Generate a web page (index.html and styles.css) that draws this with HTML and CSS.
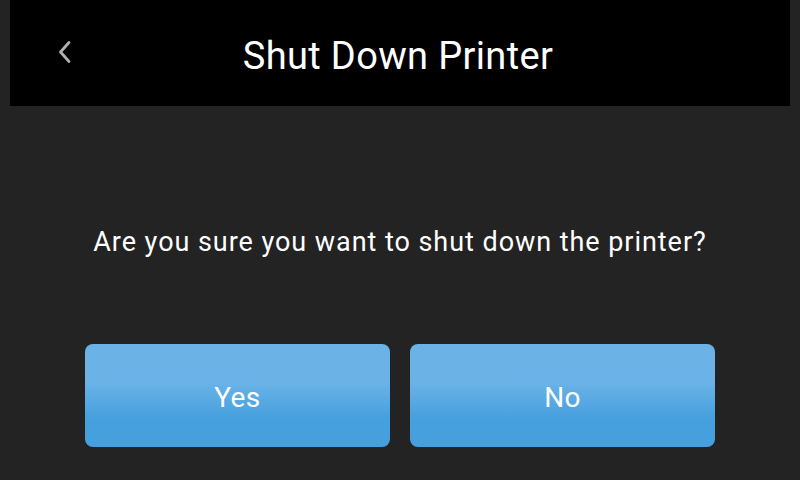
FILE: index.html
```html
<!DOCTYPE html>
<html>
<head>
<meta charset="utf-8">
<link rel="stylesheet" href="styles.css">
</head>
<body>
<div class="screen">
  <header class="topbar">
    <button class="back" aria-label="Back">
      <svg width="16" height="24" viewBox="0 0 16 24"><path d="M12 2.5 L3.5 12 L12 21.5" fill="none" stroke="#b0b0b0" stroke-width="2.8" stroke-linecap="round" stroke-linejoin="round"/></svg>
    </button>
    <h1 class="title">Shut Down Printer</h1>
  </header>
  <main class="content">
    <p class="message">Are you sure you want to shut down the printer?</p>
    <div class="actions">
      <button class="btn">Yes</button>
      <button class="btn">No</button>
    </div>
  </main>
</div>
</body>
</html>
```
FILE: styles.css
```css
html, body {
  margin: 0;
  padding: 0;
  width: 800px;
  height: 480px;
  background: #232323;
  overflow: hidden;
  font-family: Roboto, "Liberation Sans", sans-serif;
}
.screen {
  display: flex;
  flex-direction: column;
  height: 480px;
}
.topbar {
  margin: 0 10px;
  height: 106px;
  background: #000;
  display: flex;
  align-items: center;
  justify-content: center;
  position: relative;
}
.back {
  position: absolute;
  left: 47px;
  top: 40px;
  background: none;
  border: 0;
  padding: 0;
  width: 16px;
  height: 24px;
  display: flex;
}
.title {
  margin: 0 0 0 -4px;
  color: #fff;
  font-weight: 400;
  font-size: 38px;
  letter-spacing: 0.35px;
  line-height: 44px;
  padding-top: 5px;
}
.content {
  flex: 1;
  display: flex;
  flex-direction: column;
  align-items: center;
}
.message {
  margin: 119px 0 0;
  color: #fff;
  font-size: 27px;
  letter-spacing: 0.95px;
  line-height: 34px;
}
.actions {
  margin-top: 85px;
  display: flex;
  gap: 20px;
}
.btn {
  width: 305px;
  height: 103px;
  border: 0;
  border-radius: 8px;
  background: linear-gradient(to bottom, #6bb3e7 0%, #6bb3e7 36%, #47a0de 72%, #47a0de 100%);
  color: #fff;
  font-family: Roboto, "Liberation Sans", sans-serif;
  font-size: 28px;
  letter-spacing: 0.4px;
  padding: 3px 0 0;
}
```
